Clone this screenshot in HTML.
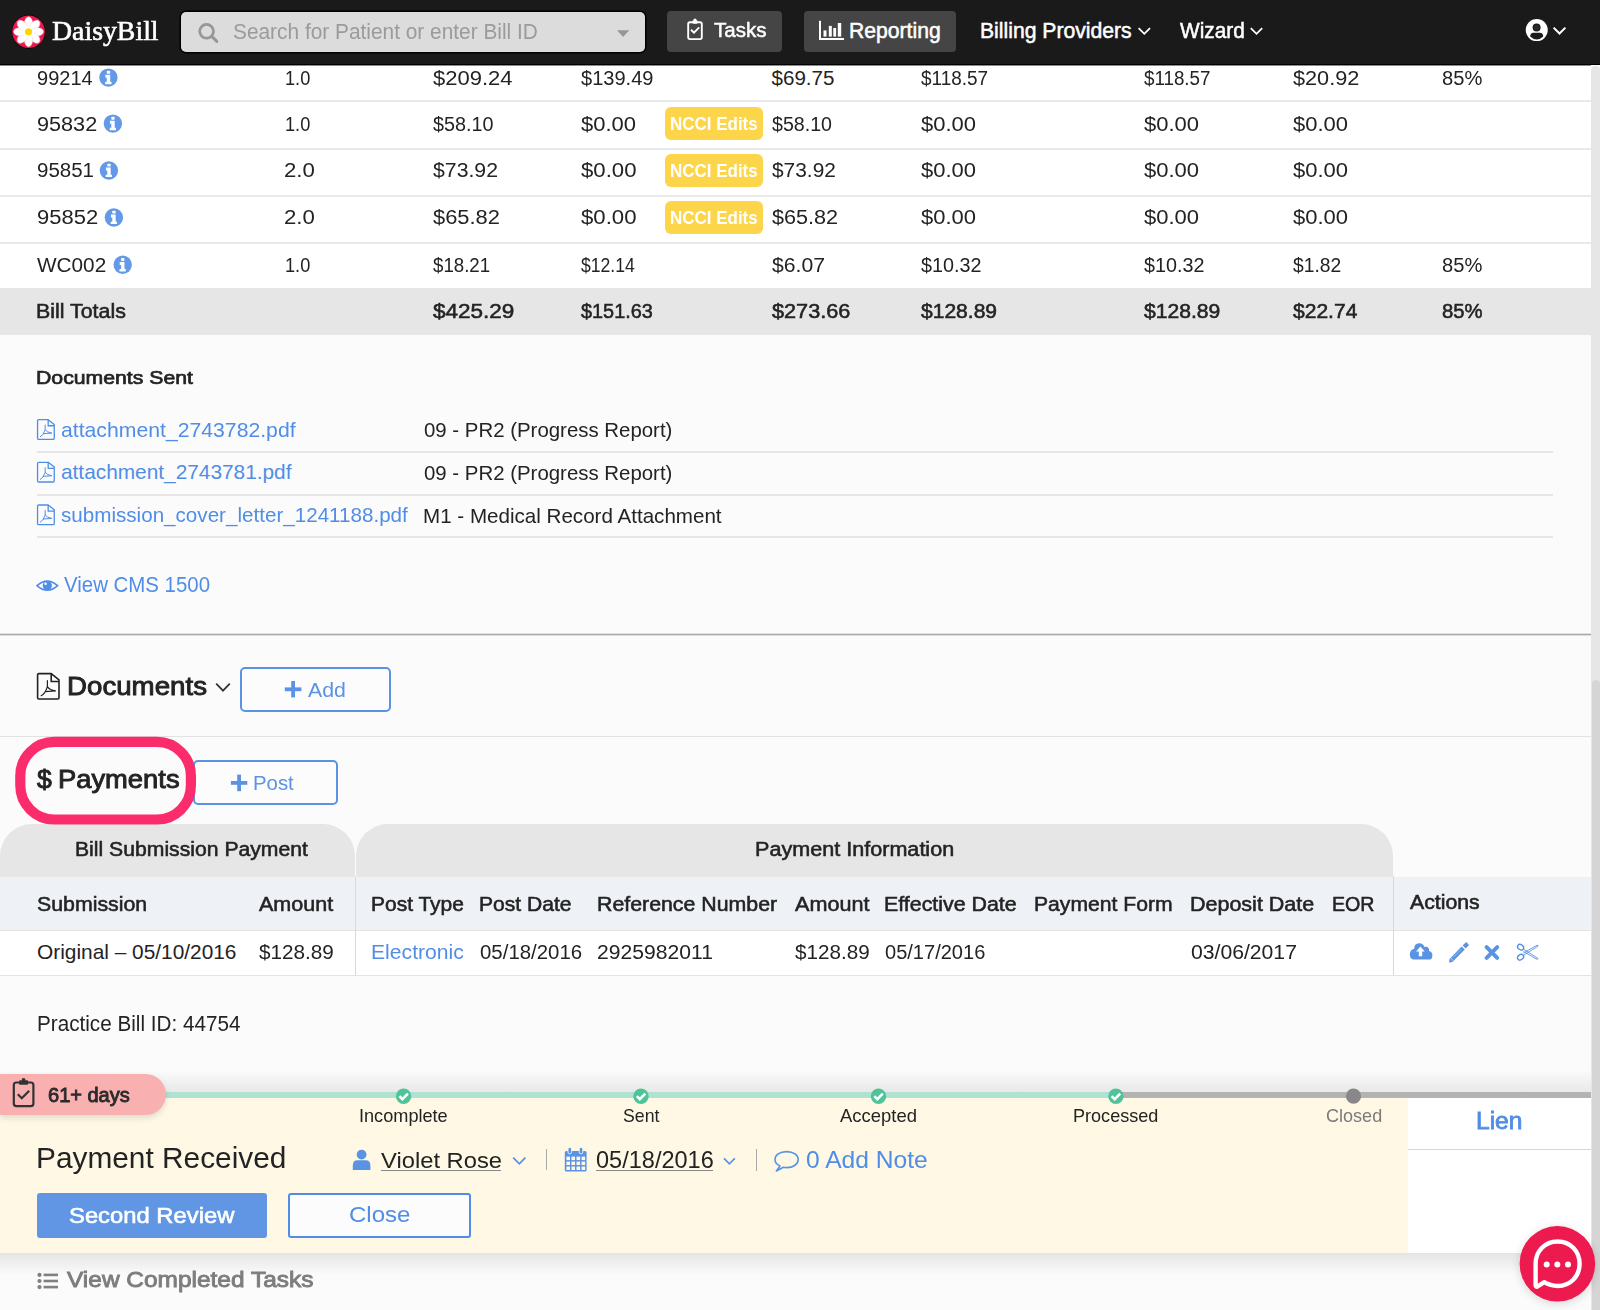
<!DOCTYPE html><html><head><meta charset="utf-8"><style>html,body{margin:0;padding:0;width:1600px;height:1310px;overflow:hidden;background:#fbfbfb;font-family:"Liberation Sans",sans-serif;}
.t{position:absolute;line-height:1;white-space:nowrap;transform-origin:0 0;}
.a{position:absolute;}
svg.a{overflow:visible;}
</style></head><body><div class="a" style="left:0px;top:64px;width:1591px;height:224px;background:#fff"></div><div class="a" style="left:0px;top:0px;width:1600px;height:64px;background:#1a1a1a"></div><div class="a" style="left:0px;top:64px;width:1600px;height:1px;background:#000"></div><div class="a" style="left:0px;top:65px;width:1591px;height:1px;background:#8c8c8c"></div><svg class="a" style="left:0px;top:0px" width="60" height="64" viewBox="0 0 60 64"><circle cx="28.55" cy="31.75" r="16.9" fill="#000"/><circle cx="28.55" cy="31.75" r="16.3" fill="#ea1850"/><ellipse cx="28.55" cy="23.4" rx="4.1" ry="6.6" transform="rotate(0 28.55 31.75)" fill="#fff" stroke="#f3c9d3" stroke-width="0.5"/><ellipse cx="28.55" cy="23.4" rx="4.1" ry="6.6" transform="rotate(45 28.55 31.75)" fill="#fff" stroke="#f3c9d3" stroke-width="0.5"/><ellipse cx="28.55" cy="23.4" rx="4.1" ry="6.6" transform="rotate(90 28.55 31.75)" fill="#fff" stroke="#f3c9d3" stroke-width="0.5"/><ellipse cx="28.55" cy="23.4" rx="4.1" ry="6.6" transform="rotate(135 28.55 31.75)" fill="#fff" stroke="#f3c9d3" stroke-width="0.5"/><ellipse cx="28.55" cy="23.4" rx="4.1" ry="6.6" transform="rotate(180 28.55 31.75)" fill="#fff" stroke="#f3c9d3" stroke-width="0.5"/><ellipse cx="28.55" cy="23.4" rx="4.1" ry="6.6" transform="rotate(225 28.55 31.75)" fill="#fff" stroke="#f3c9d3" stroke-width="0.5"/><ellipse cx="28.55" cy="23.4" rx="4.1" ry="6.6" transform="rotate(270 28.55 31.75)" fill="#fff" stroke="#f3c9d3" stroke-width="0.5"/><ellipse cx="28.55" cy="23.4" rx="4.1" ry="6.6" transform="rotate(315 28.55 31.75)" fill="#fff" stroke="#f3c9d3" stroke-width="0.5"/><circle cx="28.55" cy="31.75" r="5.5" fill="#fff"/><circle cx="28.55" cy="31.75" r="3.6" fill="#ffd500"/></svg><div class="t" style='left:51.50px;top:17.12px;font-size:28.03px;color:#fff;-webkit-text-stroke:0.6px #fff;font-family:"Liberation Serif", serif;transform:scaleX(0.9924);'>DaisyBill</div><div class="a" style="left:181px;top:12px;width:464px;height:40px;background:#dcdcdc;border-radius:5px;box-shadow:0 0 0 1.5px #000"></div><svg class="a" style="left:190px;top:15px" width="40" height="35" viewBox="190 15 40 35"><circle cx="206.6" cy="31.3" r="6.9" fill="none" stroke="#979797" stroke-width="2.7"/><line x1="211.8" y1="36.4" x2="216.8" y2="41.4" stroke="#979797" stroke-width="3" stroke-linecap="round"/></svg><div class="t" style='left:233.00px;top:21.30px;font-size:21.74px;color:#9b9b9b;transform:scaleX(0.9596);'>Search for Patient or enter Bill ID</div><svg class="a" style="left:610px;top:25px" width="25" height="20" viewBox="610 25 25 20"><polygon points="617,30.3 629.3,30.3 623.1,37" fill="#979797"/></svg><div class="a" style="left:667px;top:10.5px;width:115px;height:41.5px;background:#454545;border-radius:4px"></div><svg class="a" style="left:680px;top:15px" width="30" height="30" viewBox="680 15 30 30"><rect x="688.2" y="22.3" width="13.6" height="16.8" rx="1.8" fill="none" stroke="#fff" stroke-width="1.9"/><rect x="692.5" y="20.3" width="5" height="3.4" rx="1" fill="#fff"/><circle cx="695" cy="20" r="1.6" fill="#fff"/><polyline points="691,29.8 694,32.6 699.2,27.4" fill="none" stroke="#fff" stroke-width="1.9"/></svg><div class="t" style='left:714.00px;top:20.28px;font-size:20.87px;color:#fff;-webkit-text-stroke:0.5px #fff;transform:scaleX(0.9832);'>Tasks</div><div class="a" style="left:804px;top:11px;width:152px;height:41px;background:#454545;border-radius:4px"></div><svg class="a" style="left:815px;top:15px" width="35" height="30" viewBox="815 15 35 30"><rect x="819" y="20.8" width="2" height="19.2" fill="#fff"/><rect x="819" y="38" width="25" height="2" fill="#fff"/><rect x="823.5" y="30.4" width="3" height="6.2" fill="#fff"/><rect x="828.8" y="25.9" width="3" height="10.7" fill="#fff"/><rect x="833.3" y="28" width="2.8" height="8.6" fill="#fff"/><rect x="837.8" y="23" width="3.4" height="13.6" fill="#fff"/></svg><div class="t" style='left:849.00px;top:20.24px;font-size:21.16px;color:#fff;-webkit-text-stroke:0.5px #fff;'>Reporting</div><div class="t" style='left:980.00px;top:20.24px;font-size:21.16px;color:#fff;-webkit-text-stroke:0.5px #fff;'>Billing Providers</div><svg class="a" style="left:1130px;top:20px" width="30" height="20" viewBox="1130 20 30 20"><polyline points="1138.6,28.2 1144.3,33.8 1150,28.2" fill="none" stroke="#fff" stroke-width="1.8"/></svg><div class="t" style='left:1180.00px;top:20.24px;font-size:21.16px;color:#fff;-webkit-text-stroke:0.5px #fff;transform:scaleX(0.9843);'>Wizard</div><svg class="a" style="left:1240px;top:20px" width="30" height="20" viewBox="1240 20 30 20"><polyline points="1250.8,28.2 1256.5,33.8 1262.2,28.2" fill="none" stroke="#fff" stroke-width="1.8"/></svg><svg class="a" style="left:1520px;top:15px" width="30" height="30" viewBox="1520 15 30 30"><circle cx="1536.75" cy="30.1" r="11" fill="#fff"/><circle cx="1536.6" cy="27.6" r="4" fill="#1b1b1b"/><circle cx="1536.6" cy="27.6" r="2.9" fill="#2a2a2a"/><path d="M1530.2,36.5 Q1530.2,33 1533.5,32.8 L1539.8,32.8 Q1543.2,33 1543.2,36.5 Q1540,39.5 1536.7,39.5 Q1533.3,39.5 1530.2,36.5 Z" fill="#1b1b1b"/></svg><svg class="a" style="left:1548px;top:20px" width="25" height="20" viewBox="1548 20 25 20"><polyline points="1553.6,27.6 1559.5,33.5 1565.4,27.6" fill="none" stroke="#fff" stroke-width="2"/></svg><div class="a" style="left:0px;top:100px;width:1591px;height:2px;background:#eaeaea"></div><div class="a" style="left:0px;top:147.5px;width:1591px;height:2px;background:#eaeaea"></div><div class="a" style="left:0px;top:194.5px;width:1591px;height:2px;background:#eaeaea"></div><div class="a" style="left:0px;top:241.5px;width:1591px;height:2px;background:#eaeaea"></div><div class="a" style="left:0px;top:288px;width:1591px;height:47px;background:#e6e6e6"></div><div class="t" style='left:37.30px;top:67.58px;font-size:20.58px;color:#232323;transform:scaleX(0.9728);'>99214</div><div class="t" style='left:284.62px;top:67.58px;font-size:20.58px;color:#232323;transform:scaleX(0.8840);'>1.0</div><div class="t" style='left:433.00px;top:67.58px;font-size:20.58px;color:#232323;transform:scaleX(1.0691);'>$209.24</div><div class="t" style='left:581.00px;top:67.58px;font-size:20.58px;color:#232323;transform:scaleX(0.9744);'>$139.49</div><div class="t" style='left:771.50px;top:67.58px;font-size:20.58px;color:#232323;'>$69.75</div><div class="t" style='left:921.00px;top:67.58px;font-size:20.58px;color:#232323;transform:scaleX(0.9189);'>$118.57</div><div class="t" style='left:1143.50px;top:67.58px;font-size:20.58px;color:#232323;transform:scaleX(0.9120);'>$118.57</div><div class="t" style='left:1293.00px;top:67.58px;font-size:20.58px;color:#232323;transform:scaleX(1.0535);'>$20.92</div><div class="t" style='left:1442.00px;top:67.58px;font-size:20.58px;color:#232323;transform:scaleX(0.9787);'>85%</div><div class="t" style='left:37.30px;top:113.58px;font-size:20.58px;color:#232323;transform:scaleX(1.0521);'>95832</div><div class="t" style='left:284.62px;top:113.58px;font-size:20.58px;color:#232323;transform:scaleX(0.8840);'>1.0</div><div class="t" style='left:433.00px;top:113.58px;font-size:20.58px;color:#232323;transform:scaleX(0.9607);'>$58.10</div><div class="t" style='left:581.00px;top:113.58px;font-size:20.58px;color:#232323;transform:scaleX(1.0682);'>$0.00</div><div class="a" style="left:665px;top:106.8px;width:98px;height:33px;background:#fdd54b;border-radius:6px"></div><div class="t" style='left:669.58px;top:115.22px;font-size:18.41px;color:#fff;font-weight:700;transform:scaleX(0.9222);'>NCCI Edits</div><div class="t" style='left:771.50px;top:113.58px;font-size:20.58px;color:#232323;transform:scaleX(0.9527);'>$58.10</div><div class="t" style='left:921.00px;top:113.58px;font-size:20.58px;color:#232323;transform:scaleX(1.0682);'>$0.00</div><div class="t" style='left:1143.50px;top:113.58px;font-size:20.58px;color:#232323;transform:scaleX(1.0682);'>$0.00</div><div class="t" style='left:1293.00px;top:113.58px;font-size:20.58px;color:#232323;transform:scaleX(1.0682);'>$0.00</div><div class="t" style='left:37.30px;top:160.48px;font-size:20.58px;color:#232323;transform:scaleX(0.9957);'>95851</div><div class="t" style='left:284.42px;top:160.48px;font-size:20.58px;color:#232323;transform:scaleX(1.0792);'>2.0</div><div class="t" style='left:433.00px;top:160.48px;font-size:20.58px;color:#232323;transform:scaleX(1.0327);'>$73.92</div><div class="t" style='left:581.00px;top:160.48px;font-size:20.58px;color:#232323;transform:scaleX(1.0780);'>$0.00</div><div class="a" style="left:665px;top:153.7px;width:98px;height:33px;background:#fdd54b;border-radius:6px"></div><div class="t" style='left:669.58px;top:162.12px;font-size:18.41px;color:#fff;font-weight:700;transform:scaleX(0.9222);'>NCCI Edits</div><div class="t" style='left:771.90px;top:160.48px;font-size:20.58px;color:#232323;transform:scaleX(1.0151);'>$73.92</div><div class="t" style='left:921.00px;top:160.48px;font-size:20.58px;color:#232323;transform:scaleX(1.0682);'>$0.00</div><div class="t" style='left:1143.50px;top:160.48px;font-size:20.58px;color:#232323;transform:scaleX(1.0682);'>$0.00</div><div class="t" style='left:1293.00px;top:160.48px;font-size:20.58px;color:#232323;transform:scaleX(1.0682);'>$0.00</div><div class="t" style='left:37.30px;top:207.48px;font-size:20.58px;color:#232323;transform:scaleX(1.0697);'>95852</div><div class="t" style='left:284.42px;top:207.48px;font-size:20.58px;color:#232323;transform:scaleX(1.0792);'>2.0</div><div class="t" style='left:433.00px;top:207.48px;font-size:20.58px;color:#232323;transform:scaleX(1.0631);'>$65.82</div><div class="t" style='left:581.00px;top:207.48px;font-size:20.58px;color:#232323;transform:scaleX(1.0780);'>$0.00</div><div class="a" style="left:665px;top:200.7px;width:98px;height:33px;background:#fdd54b;border-radius:6px"></div><div class="t" style='left:669.58px;top:209.12px;font-size:18.41px;color:#fff;font-weight:700;transform:scaleX(0.9222);'>NCCI Edits</div><div class="t" style='left:771.90px;top:207.48px;font-size:20.58px;color:#232323;transform:scaleX(1.0503);'>$65.82</div><div class="t" style='left:921.00px;top:207.48px;font-size:20.58px;color:#232323;transform:scaleX(1.0682);'>$0.00</div><div class="t" style='left:1143.50px;top:207.48px;font-size:20.58px;color:#232323;transform:scaleX(1.0682);'>$0.00</div><div class="t" style='left:1293.00px;top:207.48px;font-size:20.58px;color:#232323;transform:scaleX(1.0682);'>$0.00</div><div class="t" style='left:37.30px;top:254.78px;font-size:20.58px;color:#232323;transform:scaleX(1.0084);'>WC002</div><div class="t" style='left:284.62px;top:254.78px;font-size:20.58px;color:#232323;transform:scaleX(0.8840);'>1.0</div><div class="t" style='left:433.00px;top:254.78px;font-size:20.58px;color:#232323;transform:scaleX(0.9078);'>$18.21</div><div class="t" style='left:581.00px;top:254.78px;font-size:20.58px;color:#232323;transform:scaleX(0.8550);'>$12.14</div><div class="t" style='left:771.90px;top:254.78px;font-size:20.58px;color:#232323;transform:scaleX(1.0290);'>$6.07</div><div class="t" style='left:921.00px;top:254.78px;font-size:20.58px;color:#232323;transform:scaleX(0.9607);'>$10.32</div><div class="t" style='left:1143.50px;top:254.78px;font-size:20.58px;color:#232323;transform:scaleX(0.9591);'>$10.32</div><div class="t" style='left:1293.00px;top:254.78px;font-size:20.58px;color:#232323;transform:scaleX(0.9369);'>$1.82</div><div class="t" style='left:1442.00px;top:254.78px;font-size:20.58px;color:#232323;transform:scaleX(0.9787);'>85%</div><svg class="a" style="left:90px;top:64px" width="50" height="224" viewBox="90 64 50 224"><circle cx="108.4" cy="77.6" r="9.2" fill="#6399e6"/><rect x="106.80000000000001" y="70.8" width="3.3" height="2.9" rx="0.6" fill="#fff"/><path d="M105.4,74.69999999999999 L110.2,74.69999999999999 L110.2,81.8 L111.5,81.8 L111.5,84.19999999999999 L105.2,84.19999999999999 L105.2,81.8 L106.80000000000001,81.8 L106.80000000000001,77.69999999999999 L105.4,77.69999999999999 Z" fill="#fff"/><circle cx="112.9" cy="123.6" r="9.2" fill="#6399e6"/><rect x="111.30000000000001" y="116.8" width="3.3" height="2.9" rx="0.6" fill="#fff"/><path d="M109.9,120.69999999999999 L114.7,120.69999999999999 L114.7,127.8 L116.0,127.8 L116.0,130.2 L109.7,130.2 L109.7,127.8 L111.30000000000001,127.8 L111.30000000000001,123.69999999999999 L109.9,123.69999999999999 Z" fill="#fff"/><circle cx="108.9" cy="170.5" r="9.2" fill="#6399e6"/><rect x="107.30000000000001" y="163.7" width="3.3" height="2.9" rx="0.6" fill="#fff"/><path d="M105.9,167.6 L110.7,167.6 L110.7,174.7 L112.0,174.7 L112.0,177.1 L105.7,177.1 L105.7,174.7 L107.30000000000001,174.7 L107.30000000000001,170.6 L105.9,170.6 Z" fill="#fff"/><circle cx="113.9" cy="217.5" r="9.2" fill="#6399e6"/><rect x="112.30000000000001" y="210.7" width="3.3" height="2.9" rx="0.6" fill="#fff"/><path d="M110.9,214.6 L115.7,214.6 L115.7,221.7 L117.0,221.7 L117.0,224.1 L110.7,224.1 L110.7,221.7 L112.30000000000001,221.7 L112.30000000000001,217.6 L110.9,217.6 Z" fill="#fff"/><circle cx="122.7" cy="264.8" r="9.2" fill="#6399e6"/><rect x="121.10000000000001" y="258.0" width="3.3" height="2.9" rx="0.6" fill="#fff"/><path d="M119.7,261.90000000000003 L124.5,261.90000000000003 L124.5,269.0 L125.8,269.0 L125.8,271.40000000000003 L119.5,271.40000000000003 L119.5,269.0 L121.10000000000001,269.0 L121.10000000000001,264.90000000000003 L119.7,264.90000000000003 Z" fill="#fff"/></svg><div class="t" style='left:36.45px;top:300.69px;font-size:20.36px;color:#232323;-webkit-text-stroke:0.55px #232323;transform:scaleX(1.0494);'>Bill Totals</div><div class="t" style='left:433.00px;top:300.69px;font-size:20.36px;color:#232323;-webkit-text-stroke:0.55px #232323;transform:scaleX(1.1055);'>$425.29</div><div class="t" style='left:581.00px;top:300.69px;font-size:20.36px;color:#232323;-webkit-text-stroke:0.55px #232323;transform:scaleX(0.9758);'>$151.63</div><div class="t" style='left:772.00px;top:300.69px;font-size:20.36px;color:#232323;-webkit-text-stroke:0.55px #232323;transform:scaleX(1.0645);'>$273.66</div><div class="t" style='left:921.00px;top:300.69px;font-size:20.36px;color:#232323;-webkit-text-stroke:0.55px #232323;transform:scaleX(1.0331);'>$128.89</div><div class="t" style='left:1143.50px;top:300.69px;font-size:20.36px;color:#232323;-webkit-text-stroke:0.55px #232323;transform:scaleX(1.0359);'>$128.89</div><div class="t" style='left:1293.00px;top:300.69px;font-size:20.36px;color:#232323;-webkit-text-stroke:0.55px #232323;transform:scaleX(1.0331);'>$22.74</div><div class="t" style='left:1442.00px;top:300.69px;font-size:20.36px;color:#232323;-webkit-text-stroke:0.55px #232323;transform:scaleX(0.9964);'>85%</div><div class="t" style='left:36.17px;top:369.00px;font-size:18.84px;color:#232323;-webkit-text-stroke:0.7px #232323;transform:scaleX(1.1277);'>Documents Sent</div><div class="t" style='left:61.00px;top:419.56px;font-size:20.83px;color:#4f8de6;transform:scaleX(1.0179);'>attachment_2743782.pdf</div><div class="t" style='left:423.60px;top:419.41px;font-size:21.01px;color:#232323;transform:scaleX(0.9717);'>09 - PR2 (Progress Report)</div><div class="a" style="left:37px;top:451px;width:1516px;height:2px;background:#e6e6e6"></div><div class="t" style='left:61.00px;top:462.23px;font-size:20.83px;color:#4f8de6;'>attachment_2743781.pdf</div><div class="t" style='left:423.60px;top:462.08px;font-size:21.01px;color:#232323;transform:scaleX(0.9717);'>09 - PR2 (Progress Report)</div><div class="a" style="left:37px;top:494px;width:1516px;height:2px;background:#e6e6e6"></div><div class="t" style='left:61.00px;top:504.90px;font-size:20.83px;color:#4f8de6;transform:scaleX(0.9896);'>submission_cover_letter_1241188.pdf</div><div class="t" style='left:422.62px;top:504.75px;font-size:21.01px;color:#232323;transform:scaleX(0.9802);'>M1 - Medical Record Attachment</div><div class="a" style="left:37px;top:536px;width:1516px;height:2px;background:#e6e6e6"></div><svg class="a" style="left:30px;top:410px" width="40" height="140" viewBox="30 410 40 140"><path d="M37.55,420.84999999999997 Q37.55,419.65 38.75,419.65 L48.186,419.65 L54.25,424.418 L54.25,438.15000000000003 Q54.25,439.35 53.05,439.35 L38.75,439.35 Q37.55,439.35 37.55,438.15000000000003 Z" fill="none" stroke="#4f8de6" stroke-width="1.3" stroke-linejoin="round"/><path d="M48.186,419.65 L48.186,425.762 L54.25,425.762" fill="none" stroke="#4f8de6" stroke-width="1.3"/><path d="M45.18,425.09 L45.18,429.71 Q43.379999999999995,435.38 40.32,436.85 M45.18,429.71 Q46.980000000000004,432.44 51.480000000000004,433.07 M43.379999999999995,433.7 L51.480000000000004,433.07" fill="none" stroke="#4f8de6" stroke-width="0.9750000000000001" stroke-linecap="round"/><path d="M37.55,463.52 Q37.55,462.32 38.75,462.32 L48.186,462.32 L54.25,467.088 L54.25,480.82000000000005 Q54.25,482.02000000000004 53.05,482.02000000000004 L38.75,482.02000000000004 Q37.55,482.02000000000004 37.55,480.82000000000005 Z" fill="none" stroke="#4f8de6" stroke-width="1.3" stroke-linejoin="round"/><path d="M48.186,462.32 L48.186,468.432 L54.25,468.432" fill="none" stroke="#4f8de6" stroke-width="1.3"/><path d="M45.18,467.76 L45.18,472.38 Q43.379999999999995,478.05 40.32,479.52000000000004 M45.18,472.38 Q46.980000000000004,475.11 51.480000000000004,475.74 M43.379999999999995,476.37 L51.480000000000004,475.74" fill="none" stroke="#4f8de6" stroke-width="0.9750000000000001" stroke-linecap="round"/><path d="M37.55,506.18999999999994 Q37.55,504.98999999999995 38.75,504.98999999999995 L48.186,504.98999999999995 L54.25,509.758 L54.25,523.4899999999999 Q54.25,524.6899999999999 53.05,524.6899999999999 L38.75,524.6899999999999 Q37.55,524.6899999999999 37.55,523.4899999999999 Z" fill="none" stroke="#4f8de6" stroke-width="1.3" stroke-linejoin="round"/><path d="M48.186,504.98999999999995 L48.186,511.102 L54.25,511.102" fill="none" stroke="#4f8de6" stroke-width="1.3"/><path d="M45.18,510.42999999999995 L45.18,515.05 Q43.379999999999995,520.72 40.32,522.1899999999999 M45.18,515.05 Q46.980000000000004,517.78 51.480000000000004,518.41 M43.379999999999995,519.04 L51.480000000000004,518.41" fill="none" stroke="#4f8de6" stroke-width="0.9750000000000001" stroke-linecap="round"/></svg><svg class="a" style="left:30px;top:570px" width="35" height="30" viewBox="30 570 35 30"><path d="M37,585.6 Q47.3,576.5 57.6,585.6 Q47.3,594.8 37,585.6 Z" fill="none" stroke="#4f8de6" stroke-width="1.6"/><circle cx="47.3" cy="585.4" r="4.6" fill="#4f8de6"/><circle cx="45.6" cy="583.8" r="1.3" fill="#fff"/></svg><div class="t" style='left:64.30px;top:574.57px;font-size:21.30px;color:#4f8de6;transform:scaleX(0.9589);'>View CMS 1500</div><div class="a" style="left:0px;top:633px;width:1591px;height:1px;background:#e0e0e0"></div><div class="a" style="left:0px;top:634px;width:1591px;height:1px;background:#aaaaaa"></div><div class="a" style="left:0px;top:635px;width:1591px;height:1px;background:#dddddd"></div><svg class="a" style="left:30px;top:665px" width="40" height="40" viewBox="30 665 40 40"><path d="M37.599999999999994,674.8 Q37.599999999999994,673.5999999999999 38.8,673.5999999999999 L51.221,673.5999999999999 L59.0,679.766 L59.0,697.8 Q59.0,699.0 57.8,699.0 L38.8,699.0 Q37.599999999999994,699.0 37.599999999999994,697.8 Z" fill="none" stroke="#222" stroke-width="1.6" stroke-linejoin="round"/><path d="M51.221,673.5999999999999 L51.221,681.4939999999999 L59.0,681.4939999999999" fill="none" stroke="#222" stroke-width="1.6"/><path d="M47.379999999999995,680.63 L47.379999999999995,686.5699999999999 Q45.08,693.8599999999999 41.169999999999995,695.75 M47.379999999999995,686.5699999999999 Q49.68,690.0799999999999 55.43,690.89 M45.08,691.6999999999999 L55.43,690.89" fill="none" stroke="#222" stroke-width="1.2000000000000002" stroke-linecap="round"/></svg><div class="t" style='left:66.53px;top:673.76px;font-size:25.51px;color:#232323;-webkit-text-stroke:0.9px #232323;transform:scaleX(1.0854);'>Documents</div><svg class="a" style="left:210px;top:678px" width="25" height="18" viewBox="210 678 25 18"><polyline points="216.2,683.6 223,690.6 229.8,683.6" fill="none" stroke="#333" stroke-width="1.8"/></svg><div class="a" style="left:239.5px;top:667.3px;width:151.5px;height:45px;box-sizing:border-box;border:2px solid #5a93e4;border-radius:5px;background:#fcfcfc"></div><svg class="a" style="left:280px;top:675px" width="30" height="30" viewBox="280 675 30 30"><rect x="284.8" y="687.4" width="16.6" height="3.8" fill="#5a93e4"/><rect x="291.2" y="681" width="3.8" height="16.4" fill="#5a93e4"/></svg><div class="t" style='left:308.00px;top:680.08px;font-size:20.58px;color:#5a93e4;transform:scaleX(1.0346);'>Add</div><div class="a" style="left:0px;top:735.5px;width:1591px;height:1.5px;background:#e2e2e2"></div><div class="a" style="left:192.6px;top:760.4px;width:145.2px;height:44.6px;box-sizing:border-box;border:2px solid #5a93e4;border-radius:5px;background:#fcfcfc"></div><svg class="a" style="left:225px;top:770px" width="30" height="30" viewBox="225 770 30 30"><rect x="230.9" y="781" width="16.4" height="3.8" fill="#5a93e4"/><rect x="237.2" y="774.6" width="3.8" height="16.6" fill="#5a93e4"/></svg><div class="t" style='left:253.02px;top:772.53px;font-size:20.87px;color:#5a93e4;transform:scaleX(0.9770);'>Post</div><div class="t" style='left:37.20px;top:766.96px;font-size:25.51px;color:#232323;-webkit-text-stroke:0.9px #232323;transform:scaleX(1.0429);'>$</div><div class="t" style='left:58.26px;top:766.96px;font-size:25.51px;color:#232323;-webkit-text-stroke:0.9px #232323;transform:scaleX(1.0720);'>Payments</div><div class="a" style="left:0px;top:824.2px;width:355px;height:53px;background:#e6e6e6;border-radius:32px 32px 0 0"></div><div class="a" style="left:355.7px;top:824.2px;width:1037.3px;height:53px;background:#e6e6e6;border-radius:32px 32px 0 0"></div><div class="a" style="left:0px;top:877px;width:1591px;height:53px;background:#eef1f6"></div><div class="a" style="left:0px;top:929.5px;width:1591px;height:1.5px;background:#e3e3e3"></div><div class="a" style="left:0px;top:930.5px;width:1591px;height:44.5px;background:#fff"></div><div class="a" style="left:0px;top:974.5px;width:1591px;height:1.5px;background:#e3e3e3"></div><div class="a" style="left:355px;top:877px;width:1.2px;height:98px;background:#d9d9d9"></div><div class="a" style="left:1392.6px;top:876px;width:1.2px;height:99px;background:#d9d9d9"></div><div class="t" style='left:74.93px;top:840.48px;font-size:19.78px;color:#232323;-webkit-text-stroke:0.55px #232323;transform:scaleX(1.0709);'>Bill Submission Payment</div><div class="t" style='left:754.91px;top:840.48px;font-size:19.78px;color:#232323;-webkit-text-stroke:0.55px #232323;transform:scaleX(1.0922);'>Payment Information</div><div class="t" style='left:36.70px;top:894.09px;font-size:20.36px;color:#232323;-webkit-text-stroke:0.55px #232323;transform:scaleX(1.0470);'>Submission</div><div class="t" style='left:259.30px;top:894.09px;font-size:20.36px;color:#232323;-webkit-text-stroke:0.55px #232323;transform:scaleX(1.0580);'>Amount</div><div class="t" style='left:370.97px;top:894.09px;font-size:20.36px;color:#232323;-webkit-text-stroke:0.55px #232323;transform:scaleX(1.0301);'>Post Type</div><div class="t" style='left:479.37px;top:894.09px;font-size:20.36px;color:#232323;-webkit-text-stroke:0.55px #232323;transform:scaleX(1.0343);'>Post Date</div><div class="t" style='left:596.65px;top:894.09px;font-size:20.36px;color:#232323;-webkit-text-stroke:0.55px #232323;transform:scaleX(1.0472);'>Reference Number</div><div class="t" style='left:795.40px;top:894.09px;font-size:20.36px;color:#232323;-webkit-text-stroke:0.55px #232323;transform:scaleX(1.0609);'>Amount</div><div class="t" style='left:883.65px;top:894.09px;font-size:20.36px;color:#232323;-webkit-text-stroke:0.55px #232323;transform:scaleX(1.0500);'>Effective Date</div><div class="t" style='left:1033.96px;top:894.09px;font-size:20.36px;color:#232323;-webkit-text-stroke:0.55px #232323;transform:scaleX(1.0377);'>Payment Form</div><div class="t" style='left:1189.94px;top:894.09px;font-size:20.36px;color:#232323;-webkit-text-stroke:0.55px #232323;transform:scaleX(1.0553);'>Deposit Date</div><div class="t" style='left:1331.64px;top:894.09px;font-size:20.36px;color:#232323;-webkit-text-stroke:0.55px #232323;transform:scaleX(0.9643);'>EOR</div><div class="t" style='left:1410.00px;top:892.82px;font-size:19.49px;color:#232323;-webkit-text-stroke:0.55px #232323;transform:scaleX(1.0911);'>Actions</div><div class="t" style='left:37.00px;top:941.73px;font-size:20.87px;color:#232323;'>Original – 05/10/2016</div><div class="t" style='left:259.30px;top:941.73px;font-size:20.87px;color:#232323;transform:scaleX(0.9920);'>$128.89</div><div class="t" style='left:370.99px;top:941.73px;font-size:20.87px;color:#4f8de6;transform:scaleX(1.0138);'>Electronic</div><div class="t" style='left:480.40px;top:941.73px;font-size:20.87px;color:#232323;transform:scaleX(0.9788);'>05/18/2016</div><div class="t" style='left:596.69px;top:941.73px;font-size:20.87px;color:#232323;transform:scaleX(1.0128);'>2925982011</div><div class="t" style='left:795.40px;top:941.73px;font-size:20.87px;color:#232323;transform:scaleX(0.9906);'>$128.89</div><div class="t" style='left:884.70px;top:941.73px;font-size:20.87px;color:#232323;transform:scaleX(0.9605);'>05/17/2016</div><div class="t" style='left:1191.00px;top:941.73px;font-size:20.87px;color:#232323;transform:scaleX(1.0145);'>03/06/2017</div><svg class="a" style="left:1400px;top:935px" width="150" height="35" viewBox="1400 935 150 35"><path d="M1414,959.6 L1428.6,959.6 Q1432.4,959.6 1432.4,955.4 Q1432.4,951.6 1429,951 Q1429.6,948 1427,946.8 Q1425.6,946.4 1424.6,947 Q1423,943 1419,943.2 Q1414.2,943.6 1414.2,948.8 Q1409.8,949.8 1409.8,954.6 Q1410,959.6 1414,959.6 Z" fill="#5a93e4"/>
<path d="M1420.4,946.6 L1424.8,951.4 L1422.2,951.4 L1422.2,956.2 L1418.8,956.2 L1418.8,951.4 L1416,951.4 Z" fill="#fff"/>
<path d="M1462.6,945.4 L1465.6,942.6 Q1466.2,942.1 1466.8,942.6 L1468.6,944.4 Q1469.1,945 1468.6,945.6 L1465.8,948.6 Z" fill="#5a93e4"/><path d="M1461.6,946.4 L1464.8,949.6 L1452.4,962 L1449,962.6 L1449.6,959 Z" fill="#5a93e4"/><path d="M1451.2,958.6 L1452.8,960.2" stroke="#fff" stroke-width="0.9"/><path d="M1453.2,957.4 L1461.4,949.2" stroke="#fff" stroke-width="0.5" opacity="0.7"/>
<path d="M1486.6,947.2 L1497.2,957.8 M1497.2,947.2 L1486.6,957.8" stroke="#5a93e4" stroke-width="4" stroke-linecap="round"/>
<ellipse cx="1520.6" cy="947.2" rx="3.3" ry="2.5" transform="rotate(35 1520.6 947.2)" fill="none" stroke="#5a93e4" stroke-width="1.4"/><ellipse cx="1520.6" cy="957.2" rx="3.3" ry="2.5" transform="rotate(-35 1520.6 957.2)" fill="none" stroke="#5a93e4" stroke-width="1.4"/>
<path d="M1523.4,949 L1538.2,958.6 L1537,959.4 L1523.4,951.4 M1523.4,955.4 L1538.2,946 L1537,945.2 L1523.4,953" fill="none" stroke="#5a93e4" stroke-width="0.9" stroke-linejoin="round"/></svg><div class="t" style='left:36.55px;top:1013.10px;font-size:21.74px;color:#232323;transform:scaleX(0.9516);'>Practice Bill ID: 44754</div><div class="a" style="left:0px;top:1070px;width:1591px;height:22px;background:linear-gradient(rgba(0,0,0,0),rgba(0,0,0,0.075))"></div><div class="a" style="left:0px;top:1098px;width:1408px;height:155px;background:#fef8e5"></div><div class="a" style="left:1408px;top:1098px;width:183px;height:155px;background:#fff"></div><div class="a" style="left:0px;top:1253px;width:1591px;height:22px;background:linear-gradient(rgba(0,0,0,0.09),rgba(0,0,0,0))"></div><div class="a" style="left:0px;top:1092px;width:1116px;height:6px;background:#b0e2d1"></div><div class="a" style="left:1116px;top:1092px;width:475px;height:6px;background:#b3b3b3"></div><svg class="a" style="left:390px;top:1085px" width="980" height="25" viewBox="390 1085 980 25"><circle cx="403.6" cy="1096.2" r="7.7" fill="#4fc49b"/><polyline points="399.40000000000003,1096.2 402.40000000000003,1099.2 407.90000000000003,1093.6" fill="none" stroke="#fff" stroke-width="2.6"/><circle cx="641" cy="1096.2" r="7.7" fill="#4fc49b"/><polyline points="636.8,1096.2 639.8,1099.2 645.3,1093.6" fill="none" stroke="#fff" stroke-width="2.6"/><circle cx="878.5" cy="1096.2" r="7.7" fill="#4fc49b"/><polyline points="874.3,1096.2 877.3,1099.2 882.8,1093.6" fill="none" stroke="#fff" stroke-width="2.6"/><circle cx="1115.9" cy="1096.2" r="7.7" fill="#4fc49b"/><polyline points="1111.7,1096.2 1114.7,1099.2 1120.2,1093.6" fill="none" stroke="#fff" stroke-width="2.6"/><circle cx="1353.5" cy="1096.2" r="7.6" fill="#888"/></svg><div class="t" style='left:358.68px;top:1107.61px;font-size:17.83px;color:#232323;transform:scaleX(1.0171);'>Incomplete</div><div class="t" style='left:622.90px;top:1107.61px;font-size:17.83px;color:#232323;transform:scaleX(0.9920);'>Sent</div><div class="t" style='left:840.40px;top:1107.61px;font-size:17.83px;color:#232323;transform:scaleX(1.0346);'>Accepted</div><div class="t" style='left:1072.99px;top:1107.61px;font-size:17.83px;color:#232323;transform:scaleX(1.0128);'>Processed</div><div class="t" style='left:1325.80px;top:1107.61px;font-size:17.83px;color:#7b7b7b;transform:scaleX(1.0121);'>Closed</div><div class="a" style="left:0px;top:1074px;width:166px;height:41px;background:#f9b0b0;border-radius:0 21px 21px 0;box-shadow:0 3px 6px rgba(0,0,0,0.12)"></div><svg class="a" style="left:5px;top:1070px" width="40" height="45" viewBox="5 1070 40 45"><rect x="13.8" y="1082.5" width="19.6" height="23.6" rx="2.5" fill="none" stroke="#333" stroke-width="2.2"/><rect x="19" y="1080.2" width="9.2" height="4.6" rx="1.2" fill="#333"/><circle cx="23.6" cy="1079.8" r="1.8" fill="#333"/><polyline points="17.8,1094.2 21.8,1098.2 29.2,1090.8" fill="none" stroke="#333" stroke-width="2.2"/></svg><div class="t" style='left:47.81px;top:1085.30px;font-size:20.14px;color:#2b2b2b;-webkit-text-stroke:0.9px #2b2b2b;transform:scaleX(0.9941);'>61+ days</div><div class="t" style='left:35.81px;top:1143.11px;font-size:30.00px;color:#232323;transform:scaleX(0.9943);'>Payment Received</div><svg class="a" style="left:345px;top:1145px" width="30" height="30" viewBox="345 1145 30 30"><circle cx="361.6" cy="1154.6" r="4.9" fill="#5a93e4"/><path d="M352.8,1170 L352.8,1165.5 Q352.8,1160.2 357.6,1160.2 L365.6,1160.2 Q370.4,1160.2 370.4,1165.5 L370.4,1170 Z" fill="#5a93e4"/></svg><div class="t" style='left:381.00px;top:1149.66px;font-size:22.61px;color:#232323;transform:scaleX(1.0509);'>Violet Rose</div><div class="a" style="left:381px;top:1169.6px;width:120.4px;height:1.2px;background:#888"></div><svg class="a" style="left:508px;top:1150px" width="22" height="20" viewBox="508 1150 22 20"><polyline points="513.2,1157.6 519.3,1163.8 525.4,1157.6" fill="none" stroke="#5a93e4" stroke-width="1.8"/></svg><div class="a" style="left:546px;top:1148.8px;width:1.4px;height:21.5px;background:#aaa"></div><svg class="a" style="left:560px;top:1143px" width="32" height="32" viewBox="560 1143 32 32"><rect x="564.8" y="1151" width="21.8" height="20.6" rx="1.6" fill="#5a93e4"/><rect x="566.40" y="1156.60" width="3.6" height="3.5" fill="#fef8e5"/><rect x="566.40" y="1161.55" width="3.6" height="3.5" fill="#fef8e5"/><rect x="566.40" y="1166.50" width="3.6" height="3.5" fill="#fef8e5"/><rect x="571.45" y="1156.60" width="3.6" height="3.5" fill="#fef8e5"/><rect x="571.45" y="1161.55" width="3.6" height="3.5" fill="#fef8e5"/><rect x="571.45" y="1166.50" width="3.6" height="3.5" fill="#fef8e5"/><rect x="576.50" y="1156.60" width="3.6" height="3.5" fill="#fef8e5"/><rect x="576.50" y="1161.55" width="3.6" height="3.5" fill="#fef8e5"/><rect x="576.50" y="1166.50" width="3.6" height="3.5" fill="#fef8e5"/><rect x="581.55" y="1156.60" width="3.6" height="3.5" fill="#fef8e5"/><rect x="581.55" y="1161.55" width="3.6" height="3.5" fill="#fef8e5"/><rect x="581.55" y="1166.50" width="3.6" height="3.5" fill="#fef8e5"/><rect x="568" y="1147.4" width="3.6" height="6.4" rx="1.6" fill="#5a93e4" stroke="#fef8e5" stroke-width="0.9"/><rect x="579.2" y="1147.4" width="3.6" height="6.4" rx="1.6" fill="#5a93e4" stroke="#fef8e5" stroke-width="0.9"/></svg><div class="t" style='left:596.30px;top:1148.97px;font-size:23.19px;color:#232323;transform:scaleX(1.0149);'>05/18/2016</div><div class="a" style="left:596.3px;top:1169.8px;width:117px;height:1.2px;background:#888"></div><svg class="a" style="left:720px;top:1150px" width="20" height="20" viewBox="720 1150 20 20"><polyline points="724,1158.4 729.4,1163.8 734.8,1158.4" fill="none" stroke="#5a93e4" stroke-width="1.7"/></svg><div class="a" style="left:756px;top:1148.8px;width:1.4px;height:21.8px;background:#aaa"></div><svg class="a" style="left:770px;top:1145px" width="35" height="32" viewBox="770 1145 35 32"><path d="M786.6,1151.6 C779.6,1151.6 775,1155.2 775,1159.6 C775,1162.5 777,1164.8 780,1166 L776.4,1171 L783.4,1167.3 C784.4,1167.5 785.5,1167.6 786.6,1167.6 C793.6,1167.6 798.2,1164 798.2,1159.6 C798.2,1155.2 793.6,1151.6 786.6,1151.6 Z" fill="none" stroke="#5a93e4" stroke-width="1.6" stroke-linejoin="round"/></svg><div class="t" style='left:806.00px;top:1148.97px;font-size:23.19px;color:#4f8de6;transform:scaleX(1.0613);'>0 Add Note</div><div class="a" style="left:37px;top:1193.2px;width:229.7px;height:45.1px;background:#6096e4;border-radius:3px"></div><div class="t" style='left:69.20px;top:1204.90px;font-size:21.74px;color:#fff;-webkit-text-stroke:0.6px #fff;transform:scaleX(1.0951);'>Second Review</div><div class="a" style="left:288px;top:1193px;width:183px;height:45px;box-sizing:border-box;border:2px solid #4f8de6;border-radius:3px;background:#fcfcfc"></div><div class="t" style='left:348.74px;top:1204.26px;font-size:22.61px;color:#4f8de6;transform:scaleX(1.0623);'>Close</div><div class="t" style='left:1476.26px;top:1110.13px;font-size:23.48px;color:#4f8de6;-webkit-text-stroke:0.8px #4f8de6;transform:scaleX(1.0445);'>Lien</div><div class="a" style="left:1408px;top:1148.6px;width:183px;height:1.6px;background:#d6d6d6"></div><svg class="a" style="left:30px;top:1265px" width="35" height="30" viewBox="30 1265 35 30"><circle cx="39.5" cy="1274.9" r="2.1" fill="#808080"/><circle cx="39.5" cy="1281" r="2.1" fill="#808080"/><circle cx="39.5" cy="1287.1" r="2.1" fill="#808080"/><rect x="43.6" y="1273.6" width="14.4" height="2.6" fill="#808080"/><rect x="43.6" y="1279.7" width="14.4" height="2.6" fill="#808080"/><rect x="43.6" y="1285.8" width="14.4" height="2.6" fill="#808080"/></svg><div class="t" style='left:67.40px;top:1268.93px;font-size:22.46px;color:#7d7d7d;-webkit-text-stroke:0.9px #7d7d7d;transform:scaleX(1.0888);'>View Completed Tasks</div><div class="a" style="left:1591px;top:66px;width:9px;height:1244px;background:#e6e6e6;border-radius:4px 4px 0 0"></div><div class="a" style="left:1591.5px;top:679.6px;width:8.5px;height:640px;background:#d5d5d5;border-radius:5px 5px 0 0"></div><svg class="a" style="left:1510px;top:1215px" width="90" height="95" viewBox="1510 1215 90 95"><circle cx="1557.4" cy="1263.8" r="37.8" fill="#ec1a4e" style="filter:drop-shadow(0 2px 4px rgba(0,0,0,0.15))"/><path d="M1557.6,1241.5 C1570.6,1241.5 1579.6,1251.5 1579.6,1263.8 C1579.6,1276.2 1570.6,1286 1557.6,1286 C1552,1286 1548,1284.5 1544.2,1282.2 L1537.5,1286.5 C1536.5,1287 1535.6,1286.2 1535.6,1285.2 L1535.6,1263.8 C1535.6,1251.5 1544.6,1241.5 1557.6,1241.5 Z" fill="none" stroke="#fff" stroke-width="4.4" stroke-linejoin="round"/><circle cx="1546.7" cy="1264.4" r="3" fill="#fff"/><circle cx="1557.3" cy="1264.4" r="3" fill="#fff"/><circle cx="1568" cy="1264.4" r="3" fill="#fff"/></svg><svg class="a" style="left:10px;top:730px" width="190" height="100" viewBox="10 730 190 100"><rect x="20.3" y="741.9" width="170.6" height="77.6" rx="34" ry="34" fill="none" stroke="#fb2c6b" stroke-width="10.2"/></svg></body></html>
